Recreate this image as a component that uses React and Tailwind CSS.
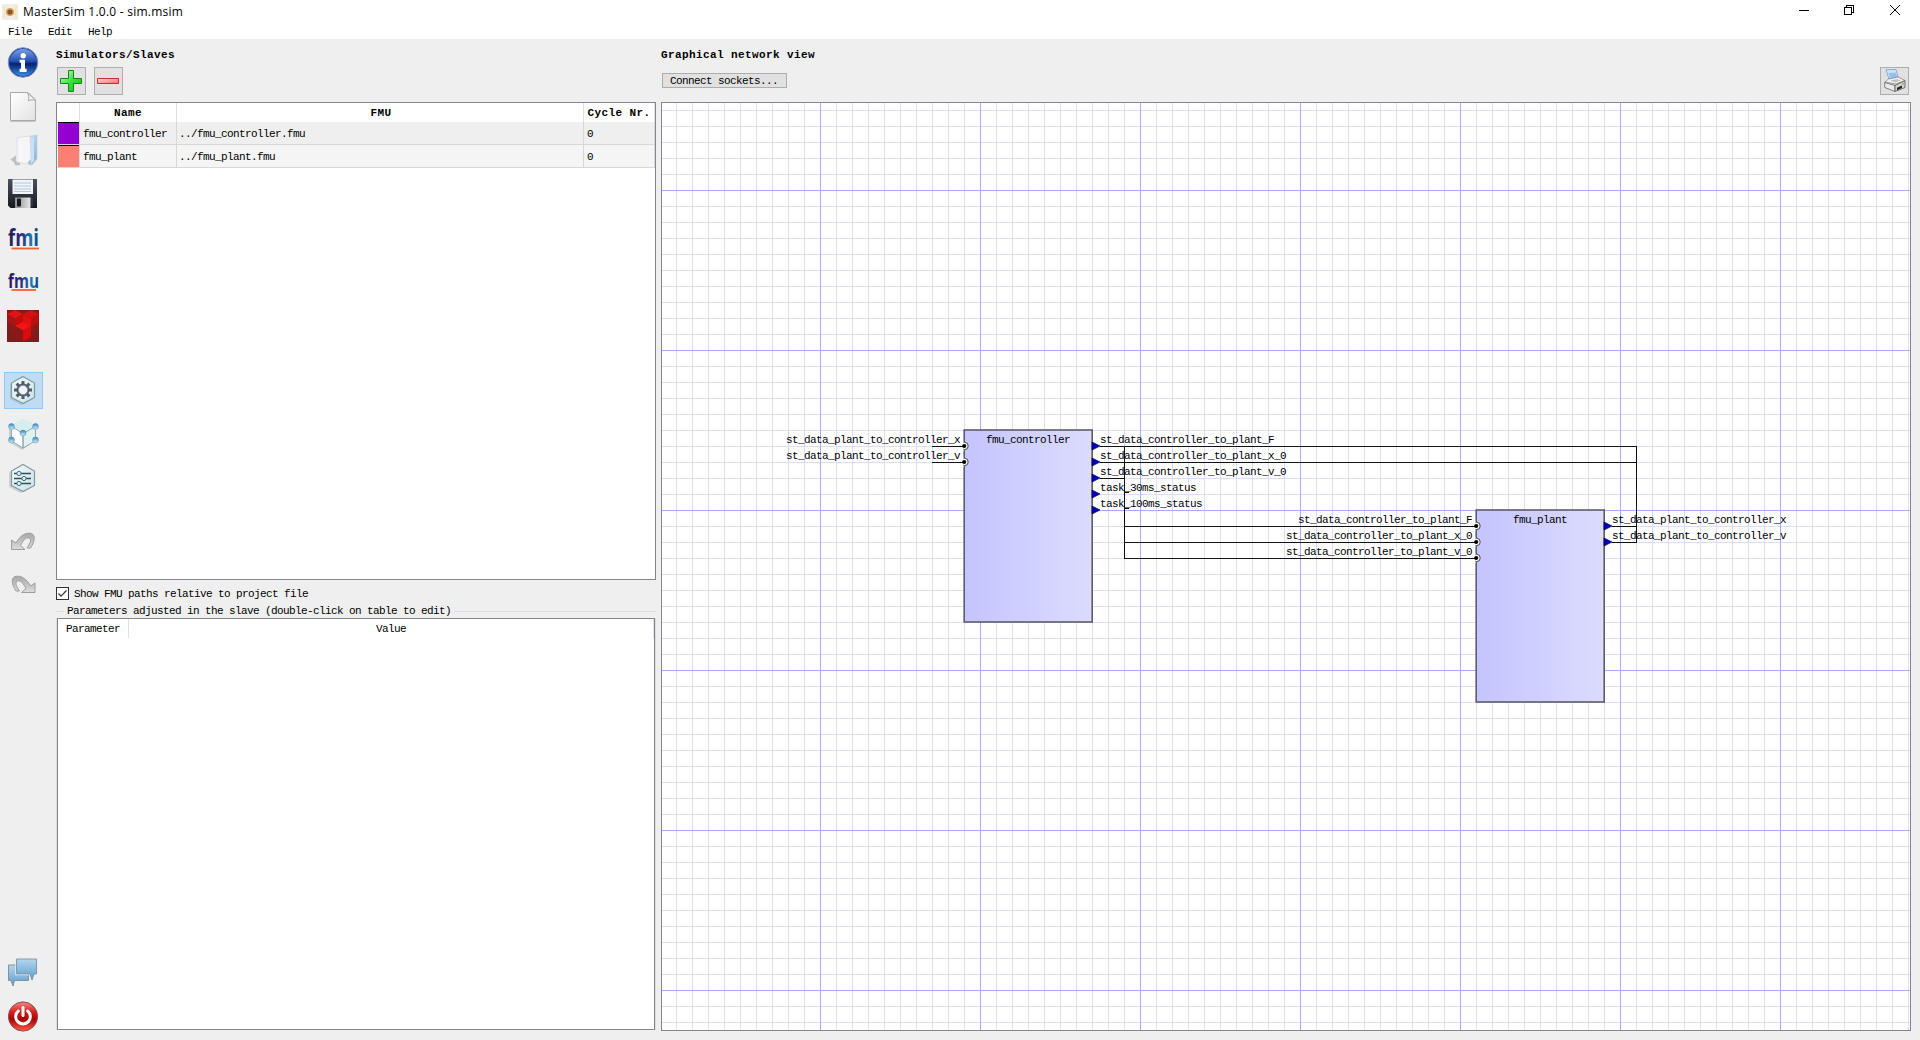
import React from "react";

const MONO = "font-['Liberation_Mono','Noto_Sans_CJK_SC',monospace]";
const TEXT = `${MONO} text-[11px] leading-[14px] tracking-[-0.6px] whitespace-pre text-black`;
const BOLD = `${MONO} text-[11px] leading-[14px] tracking-[0.4px] font-bold whitespace-pre text-black`;

function Icon({ children }) {
  return (
    <svg width="32" height="32" viewBox="0 0 32 32" className="block shrink-0 overflow-visible">
      {children}
    </svg>
  );
}

function Gradients() {
  return (
    <svg width="0" height="0" className="absolute">
      <defs>
        <linearGradient id="blueBall" x1="0" y1="0" x2="0" y2="1">
          <stop offset="0" stopColor="#7d9fe4" />
          <stop offset=".45" stopColor="#2450b4" />
          <stop offset=".55" stopColor="#04216f" />
          <stop offset="1" stopColor="#3f8be6" />
        </linearGradient>
        <linearGradient id="page" x1="0" y1="0" x2="1" y2="1">
          <stop offset="0" stopColor="#ffffff" />
          <stop offset="1" stopColor="#e2e2e2" />
        </linearGradient>
        <linearGradient id="folder" x1="0" y1="0" x2="1" y2="1">
          <stop offset="0" stopColor="#d8ebf8" />
          <stop offset="1" stopColor="#7fb0d6" />
        </linearGradient>
        <linearGradient id="disk" x1="0" y1="0" x2="0" y2="1">
          <stop offset="0" stopColor="#4a5260" />
          <stop offset="1" stopColor="#14171d" />
        </linearGradient>
        <linearGradient id="metal" x1="0" y1="0" x2="1" y2="0">
          <stop offset="0" stopColor="#8e8e8e" />
          <stop offset="1" stopColor="#e6e6e6" />
        </linearGradient>
        <linearGradient id="fm" x1="0" y1="0" x2="1" y2="0">
          <stop offset="0" stopColor="#2b1a5c" />
          <stop offset=".4" stopColor="#2a2a78" />
          <stop offset=".75" stopColor="#1878b4" />
          <stop offset="1" stopColor="#123c78" />
        </linearGradient>
        <radialGradient id="redBox">
          <stop offset="0" stopColor="#a81616" />
          <stop offset="1" stopColor="#7c1c1c" />
        </radialGradient>
        <linearGradient id="hex" x1="0" y1="0" x2="1" y2="1">
          <stop offset="0" stopColor="#f4fbfb" />
          <stop offset="1" stopColor="#c5e4e6" />
        </linearGradient>
        <linearGradient id="knob" x1="0" y1="0" x2="0" y2="1">
          <stop offset="0" stopColor="#3a86b4" />
          <stop offset=".5" stopColor="#7fc0e4" />
          <stop offset="1" stopColor="#e8f6ff" />
        </linearGradient>
        <linearGradient id="arrow" x1="0" y1="0" x2="0" y2="1">
          <stop offset="0" stopColor="#a8a8a8" />
          <stop offset="1" stopColor="#dcdcdc" />
        </linearGradient>
        <linearGradient id="bubble" x1="0" y1="0" x2="0" y2="1">
          <stop offset="0" stopColor="#b4d6ee" />
          <stop offset="1" stopColor="#5b9ccd" />
        </linearGradient>
        <linearGradient id="power" x1="0" y1="0" x2="0" y2="1">
          <stop offset="0" stopColor="#f08a80" />
          <stop offset=".35" stopColor="#d81c1c" />
          <stop offset=".6" stopColor="#a80404" />
          <stop offset="1" stopColor="#ff5a4a" />
        </linearGradient>
        <linearGradient id="plus" x1="0" y1="0" x2="1" y2="1">
          <stop offset="0" stopColor="#e0ffd8" />
          <stop offset=".5" stopColor="#3ee03e" />
          <stop offset="1" stopColor="#00c800" />
        </linearGradient>
        <linearGradient id="minus" x1="0" y1="0" x2="1" y2="1">
          <stop offset="0" stopColor="#ffd4d4" />
          <stop offset="1" stopColor="#f47070" />
        </linearGradient>
      </defs>
    </svg>
  );
}

const InfoIcon = () => (
  <Icon>
    <circle cx="16" cy="16.5" r="14.8" fill="#1c3f94" stroke="#7d93c4" strokeWidth="1" />
    <circle cx="16" cy="16.5" r="13.6" fill="url(#blueBall)" />
    <circle cx="16.2" cy="9.8" r="2.7" fill="#fff" />
    <path d="M12.6 13.8h5.4v9h1.6v3.2h-7v-3.2h1.4v-6h-1.4z" fill="#fff" />
  </Icon>
);

const NewIcon = () => (
  <Icon>
    <path d="M3.5 31.5h25" stroke="#c4c4c4" strokeWidth="1" />
    <path d="M3.5 2.5H21l7.5 7.5v20.5h-25z" fill="url(#page)" stroke="#a9a9a9" />
    <path d="M20.5 2.5c1.5 3 1.5 5.5.8 8.2 2.2-1 4.5-1 7.2-.4z" fill="#f2f2f2" stroke="#a9a9a9" />
  </Icon>
);

const OpenIcon = () => (
  <Icon>
    <path d="M3.500 25.500l6-4.500 4 10-5 .5-1.500-3z" fill="#b0b4b8" opacity=".8" />
    <path d="M19 3l11-2v24l-5 6-4-1z" fill="url(#folder)" stroke="#b9d3e6" strokeWidth=".7" />
    <path d="M10.5 3.5L23 2l1 23-5 5-8.5-2z" fill="#f6f6f6" stroke="#d8dadc" strokeWidth=".8" />
    <path d="M24 4l3-1v24l-3 3z" fill="#c9e1f3" />
    <path d="M9 4l2-1v26l-2-2z" fill="#e6eaee" />
  </Icon>
);

const SaveIcon = () => (
  <Icon>
    <path d="M1.5 1h28a.8.8 0 0 1 .5.8V30H3.5L1 27.500V1.500z" fill="url(#disk)" />
    <path d="M5.5 1.500H26v14.500H5.5z" fill="#f1f5f9" />
    <path d="M7 5h17M7 8h17M7 11h17M7 13.500h17" stroke="#b4c6d8" strokeWidth="1" />
    <path d="M8 19.500h15.5v10.500H8z" fill="url(#metal)" />
    <rect x="10" y="20.500" width="4" height="8" rx="1" fill="#15181d" />
    <path d="M25 20v9" stroke="#454b55" />
  </Icon>
);

function LogoIcon({ text, size, y, line }) {
  return (
    <Icon>
      <text x="1" y={y} textLength="31" lengthAdjust="spacingAndGlyphs" fontFamily="Open Sans, sans-serif" fontWeight="700" fontSize={size} fill="url(#fm)">
        {text}
      </text>
      <path d={`M4.500 ${line}H${text === "fmi" ? 32 : 29}`} stroke="#f0642c" strokeWidth="1.8" />
    </Icon>
  );
}

const SimIcon = () => (
  <Icon>
    <path d="M0 0h32v32H0z" fill="url(#redBox)" />
    <path d="M0 4l8-4 8 4-8 4.500z" fill="#e01414" />
    <path d="M16 4l8-4 8 4-8 4.500z" fill="#d01212" />
    <path d="M0 4l8 4.500v8L0 12z" fill="#a41616" />
    <path d="M8 8.500L16 4v8l-8 4.500z" fill="#c40c0c" />
    <path d="M16 4l8 4.500v8L16 12z" fill="#e41010" />
    <path d="M24 8.500L32 4v8.500l-8 4.500z" fill="#bb1010" />
    <path d="M8 16l8-4 8 4-8 4.500z" fill="#f41414" />
    <path d="M8 16l8 4.500v11L8 27z" fill="#8a1818" />
    <path d="M16 20.500l8-4.500v11l-8 4.500z" fill="#d80c0c" />
  </Icon>
);

const HEX = "M16 2.500L27.500 9v14.500L16 29.500 4.500 23.500V9z";

const GearIcon = () => (
  <Icon>
    <path d={HEX} transform="translate(-1.5 1.5)" fill="#8a9aa4" opacity=".35" />
    <path d={HEX} fill="url(#hex)" stroke="#7f98a2" strokeWidth="1.2" />
    <g stroke="#555b69" strokeWidth="3">
      <path d="M16 7v18M7 16h18M9.600 9.600l12.800 12.800M22.400 9.600L9.600 22.400" />
    </g>
    <circle cx="16" cy="16" r="6.5" fill="#555b69" />
    <circle cx="16" cy="16" r="4.6" fill="#edf5fa" stroke="#8f95a3" />
  </Icon>
);

const CubeIcon = () => (
  <Icon>
    <path d="M2 11l12-7 13 6v14l-12 8-13-8z" fill="#8a9aa4" opacity=".4" />
    <path d="M16 1.500L28.500 8.500v14L16 30 4.500 22.500v-14z" fill="url(#hex)" stroke="#7f9aa6" strokeWidth="1" />
    <path d="M16 1.500L28.500 8.500 16 15.500 4.500 8.500z" fill="#d5eef0" stroke="#e8f8f8" />
    <path d="M4.500 8.500L16 15.500v14L4.500 22.500z" fill="#fafefe" />
    <path d="M16 15.500l12.500-7v14l-12.500 7z" fill="#dff1f3" />
    <path d="M4.500 8.500L16 15.500l12.500-7M4.500 8.500v14M28.500 8.500v14" stroke="#90a8b4" fill="none" strokeWidth="1" />
    <path d="M16 15.500v14" stroke="#68808c" />
    {[[4.5, 8.5], [28.5, 8.5], [16, 15], [4.5, 22], [28.5, 22]].map(([x, y]) => (
      <circle key={`${x}-${y}`} cx={x} cy={y} r="2.9" fill="url(#knob)" stroke="#5888a4" strokeWidth=".6" />
    ))}
  </Icon>
);

const SlidersIcon = () => (
  <Icon>
    <path d={HEX} transform="translate(-2.5 1.5)" fill="#8a9aa4" opacity=".35" />
    <path d={HEX} fill="url(#hex)" stroke="#7f98a2" strokeWidth="1.2" />
    <path d="M7 11.500h17M7 16.500h17M7 21.500h17" stroke="#3f4a55" strokeWidth="1.3" />
    {[[12, 11.5], [17, 16.5], [12, 21.5]].map(([x, y]) => (
      <circle key={y} cx={x} cy={y} r="2.1" fill="#d8f1fb" stroke="#3c6e86" strokeWidth="1" />
    ))}
  </Icon>
);

const ARROW = "M4.500 14.500L9 17.500C13 10 19 6.500 24.500 8c4 1.500 3.500 8-1 14.500h-3.500c4-5.500 4.500-9 2-10-3-1-6 2.500-8.500 7.500l4.500 4H4.500z";
const UndoIcon = () => (
  <Icon>
    <path d={ARROW} transform="translate(0 -.5)" fill="url(#arrow)" stroke="#9d9d9d" strokeWidth="1" strokeLinejoin="round" />
  </Icon>
);
const RedoIcon = () => (
  <Icon>
    <g transform="translate(32.500 -1.500) scale(-1 1)">
      <path d={ARROW} fill="url(#arrow)" stroke="#9d9d9d" strokeWidth="1" strokeLinejoin="round" />
    </g>
  </Icon>
);

const ChatIcon = () => (
  <Icon>
    <path d="M1.500 8h20v15.500H7.500l-1.500 5.500-2-5.500H1.500z" fill="url(#bubble)" stroke="#84919b" />
    <path d="M9.500 2h20v15h-2.500l-2 6-2-6H9.500z" fill="url(#bubble)" stroke="#e8eef2" strokeWidth="2.5" />
    <path d="M9.500 2h20v15h-2.500l-2 6-2-6H9.500z" fill="url(#bubble)" stroke="#84919b" strokeWidth=".9" />
  </Icon>
);

const PowerIcon = () => (
  <Icon>
    <circle cx="16" cy="15.5" r="14.6" fill="url(#power)" stroke="#8b4a4a" strokeWidth="1" />
    <path d="M11.300 10a7.300 7.300 0 1 0 9.400 0" fill="none" stroke="#fff" strokeWidth="3" strokeLinecap="round" />
    <path d="M16 6.500v8" stroke="#fff" strokeWidth="3" strokeLinecap="round" />
  </Icon>
);

function ToolButton({ active, children }) {
  return (
    <div className="flex h-11 w-full shrink-0 items-center justify-center">
      <div className={active ? "flex h-[37px] w-[39px] items-center justify-center border border-[#90c8f6] bg-[#c0dcf3]" : "flex h-[37px] w-[39px] items-center justify-center"}>
        {children}
      </div>
    </div>
  );
}

function TitleBar() {
  return (
    <div className="flex h-[23px] shrink-0 items-center bg-white pl-[2px]">
      <svg width="16" height="16" viewBox="0 0 16 16" className="shrink-0">
        <rect width="16" height="16" rx="1" fill="#efede6" />
        <path d="M2 2q2 6 0 12M14 2q-2 6 0 12" stroke="#f4e39a" fill="none" />
        <circle cx="8" cy="8" r="4" fill="#d9a560" />
        <circle cx="8" cy="8" r="2.6" fill="#85562c" />
      </svg>
      <span className="ml-[5px] whitespace-pre font-['Open_Sans',sans-serif] text-[12px] leading-4 tracking-[0.24px] text-black">MasterSim 1.0.0 - sim.msim</span>
      <svg width="120" height="20" viewBox="0 0 120 20" className="mr-[10px] mb-px ml-auto" fill="none" stroke="#000" shapeRendering="crispEdges">
        <path d="M9 9.500h10" />
        <path d="M54.500 6.500h7v7h-7zM56.500 6.500v-2h7v7h-2" />
        <path d="M100 4l10 10M110 4l-10 10" shapeRendering="auto" />
      </svg>
    </div>
  );
}

function NameTable() {
  const rows = [
    ["bg-[#9400d3]", "bg-[#efefef]", "fmu_controller", "../fmu_controller.fmu"],
    ["bg-[#fa8072]", "bg-[#f5f5f5]", "fmu_plant", "../fmu_plant.fmu"],
  ];
  const cols = "grid grid-cols-[23px_97px_407px_1fr]";
  return (
    <div className="h-[478px] shrink-0 border border-[#828790] bg-white">
      <div className={`${cols} h-[19px] text-center ${BOLD}`}>
        <div className="border-r border-[#e0e0e0]" />
        <div className="border-r border-[#e0e0e0] pt-[3px]">Name</div>
        <div className="border-r border-[#e0e0e0] pt-[3px] pl-[2px]">FMU</div>
        <div className="border-r border-[#e0e0e0] pt-[3px]">Cycle Nr.</div>
      </div>
      {rows.map(([color, bg, name, fmu]) => (
        <div key={name} className={`${cols} h-[23px] ${TEXT} ${bg}`}>
          <div className="border-r border-b border-[#d8d8d8] pl-px">
            <div className={`h-full border-t border-black ${color}`} />
          </div>
          <div className="border-r border-b border-[#d8d8d8] pt-[5px] pl-[3px]">{name}</div>
          <div className="border-r border-b border-[#d8d8d8] pt-[5px] pl-[2px]">{fmu}</div>
          <div className="border-r border-b border-[#d8d8d8] pt-[5px] pl-[3px]">0</div>
        </div>
      ))}
    </div>
  );
}

function LeftPanel() {
  return (
    <div className="flex w-[600px] shrink-0 flex-col">
      <div className={`${BOLD} mt-[9px]`}>Simulators/Slaves</div>
      <div className="mt-[5px] flex gap-2 pl-px">
        <div className="flex h-7 w-[29px] items-center border border-[#adadad] bg-[#e1e1e1] pl-[2px]">
          <svg width="22" height="22" viewBox="0 0 22 22">
            <path d="M8.500.5h5v8h8v5h-8v8h-5v-8h-8v-5h8z" fill="url(#plus)" stroke="#0b8a14" strokeLinejoin="round" />
          </svg>
        </div>
        <div className="flex h-7 w-[29px] items-center border border-[#adadad] bg-[#e1e1e1] pl-[2px]">
          <svg width="22" height="22" viewBox="0 0 22 22">
            <path d="M.5 8.500h21v5H.5z" fill="url(#minus)" stroke="#c62d2d" strokeLinejoin="round" />
          </svg>
        </div>
      </div>
      <div className="h-[7px] shrink-0" />
      <NameTable />
      <div className="mt-[7px] flex h-[13px] shrink-0 items-center">
        <svg width="13" height="13" viewBox="0 0 13 13" className="shrink-0">
          <rect x=".5" y=".5" width="12" height="12" fill="#fff" stroke="#333" />
          <path d="M2.500 6.500L5 9.200l5.500-5.700" fill="none" stroke="#333" strokeWidth="1.2" />
        </svg>
        <span className={`${TEXT} ml-[5px]`}>Show FMU paths relative to project file</span>
      </div>
      <div className="mt-[4px] flex h-[14px] shrink-0 items-center">
        <div className="mt-[1px] h-px w-[8px] bg-[#dcdcdc]" />
        <span className={`${TEXT} mx-[3px]`}>Parameters adjusted in the slave (double-click on table to edit)</span>
        <div className="mt-[1px] h-px grow bg-[#dcdcdc]" />
      </div>
      <div className="flex h-[412px] border-x border-[#dcdcdc]">
        <div className="grow border border-[#828790] bg-white">
          <div className={`${TEXT} flex h-[19px]`}>
            <div className="w-[71px] border-r border-[#e0e0e0] pt-[3px] pl-[8px]">Parameter</div>
            <div className="grow border-r border-[#e0e0e0] pt-[3px] text-center">Value</div>
          </div>
        </div>
      </div>
    </div>
  );
}

/* Nodes of the network; coordinates are relative to the canvas' inner corner. */
const NODES = [
  {
    name: "fmu_controller", x: 302, y: 327,
    inputs: ["st_data_plant_to_controller_x", "st_data_plant_to_controller_v"],
    outputs: ["st_data_controller_to_plant_F", "st_data_controller_to_plant_x_0", "st_data_controller_to_plant_v_0", "task_30ms_status", "task_100ms_status"],
  },
  {
    name: "fmu_plant", x: 814, y: 407,
    inputs: ["st_data_controller_to_plant_F", "st_data_controller_to_plant_x_0", "st_data_controller_to_plant_v_0"],
    outputs: ["st_data_plant_to_controller_x", "st_data_plant_to_controller_v"],
  },
];

function Canvas() {
  return (
    <div className="relative h-[929px] w-[1250px] shrink-0 overflow-hidden border border-[#828790] bg-white">
      <svg width="1248" height="927" className="absolute top-0 left-0 block">
        <defs>
          <pattern id="minor" x="14" y="7" width="16" height="16" patternUnits="userSpaceOnUse">
            <path d="M0 .5H16M.5 0V16" stroke="#dcdcff" shapeRendering="crispEdges" />
          </pattern>
          <pattern id="major" x="158" y="87" width="160" height="160" patternUnits="userSpaceOnUse">
            <path d="M0 .5H160M.5 0V160" stroke="#aaaaff" shapeRendering="crispEdges" />
          </pattern>
          <linearGradient id="block">
            <stop offset="0" stopColor="#c4c4ff" />
            <stop offset="1" stopColor="#dcdcff" />
          </linearGradient>
        </defs>
        <rect width="1248" height="927" fill="url(#minor)" />
        <rect width="1248" height="927" fill="url(#major)" />
        {NODES.map((n) => (
          <g key={n.name}>
            <rect x={n.x + 0.2} y={n.y} width="128" height="192" fill="url(#block)" stroke="#5c5c6a" strokeWidth="1.6" />
            {n.inputs.map((s, i) => (
              <circle key={s} cx={n.x + 0.5} cy={n.y + 16 + 16 * i} r="3.7" fill="#fff" stroke="#444" strokeWidth="1" />
            ))}
            {n.inputs.map((s, i) => (
              <path key={s} d={`M${n.x - 3.7} ${n.y + 11 + 16 * i}h3.200v10h-3.200z`} fill="#fff" />
            ))}
            {n.outputs.map((s, i) => (
              <path key={s} d={`M${n.x + 128} ${n.y + 12 + 16 * i}l8 4-8 4z`} fill="#0000c8" stroke="#000030" strokeWidth=".7" />
            ))}
          </g>
        ))}
        <g fill="none" stroke="#111118" shapeRendering="crispEdges">
          <path d="M270 343.500H302M270 359.500H302" />
          <path d="M438 343.500H974.500V423.500H950M438 359.500H974.500V439.500H950" />
          <path d="M438 375.500H462.500M462.500 343V455.500H814M462.500 423.500H814M462.500 439.500H814M462 389.500H467M462 405.500H467" />
        </g>
        {NODES.flatMap((n) => n.inputs.map((s, i) => (
          <circle key={n.name + s} cx={n.x + 0.2} cy={n.y + 16 + 16 * i} r="2.1" fill="#000" />
        )))}
      </svg>
      {NODES.map((n) => (
        <React.Fragment key={n.name}>
          <div className={`${TEXT} absolute w-32 text-center`} style={{ left: n.x, top: n.y + 3 }}>{n.name}</div>
          <div className={`${TEXT} absolute w-[200px] text-right leading-4!`} style={{ left: n.x - 204, top: n.y + 2 }}>
            {n.inputs.map((s) => <div key={s} className="h-4">{s}</div>)}
          </div>
          <div className={`${TEXT} absolute leading-4!`} style={{ left: n.x + 136, top: n.y + 2 }}>
            {n.outputs.map((s) => <div key={s} className="h-4">{s}</div>)}
          </div>
        </React.Fragment>
      ))}
    </div>
  );
}

const PrinterIcon = () => (
  <svg width="22" height="24" viewBox="0 0 22 24">
    <path d="M2 .8L12 .5l2.500 9L5 10z" fill="#cfe4fb" stroke="#7a9cc8" strokeWidth=".8" />
    <path d="M4.500 4l7.500-.5 1.200 5-6.700 1z" fill="#93c0f4" />
    <path d="M4.500 10l9.500-2 7 3.500-9 3.500L1 13z" fill="#f4f4f2" stroke="#777" strokeWidth=".7" />
    <path d="M.6 13.500L11 16.500v6L.8 18.500z" fill="#ecece9" stroke="#666" strokeWidth=".8" />
    <path d="M11 16.500l10-5v7l-10 4z" fill="#d4d4d0" stroke="#555" strokeWidth=".8" />
    <path d="M13 18.800l5-2.200v2.400l-5 2.200z" fill="#222" />
    <path d="M18 14.500l2-.8v1.600l-2 .8z" fill="#4adf2a" />
    <path d="M6 11.500l7-1.500 4 1.500-6 2z" fill="#c2c2bf" />
  </svg>
);

export default function App() {
  return (
    <div className="flex h-[1040px] w-[1920px] flex-col overflow-hidden bg-[#efefef]">
      <Gradients />
      <TitleBar />
      <div className={`${TEXT} flex h-4 shrink-0 gap-4 bg-white pt-[2px] pl-[8px]`}>
        <span>File</span><span>Edit</span><span>Help</span>
      </div>
      <div className="flex grow">
        <div className="flex w-[46px] shrink-0 flex-col pt-px">
          <ToolButton><InfoIcon /></ToolButton>
          <ToolButton><NewIcon /></ToolButton>
          <ToolButton><OpenIcon /></ToolButton>
          <ToolButton><SaveIcon /></ToolButton>
          <ToolButton><LogoIcon text="fmi" size="24" y="24" line="26.5" /></ToolButton>
          <ToolButton><LogoIcon text="fmu" size="20" y="22" line="24" /></ToolButton>
          <ToolButton><SimIcon /></ToolButton>
          <div className="h-5" />
          <ToolButton active><GearIcon /></ToolButton>
          <ToolButton><CubeIcon /></ToolButton>
          <ToolButton><SlidersIcon /></ToolButton>
          <div className="h-5" />
          <ToolButton><UndoIcon /></ToolButton>
          <ToolButton><RedoIcon /></ToolButton>
          <div className="mt-auto mb-px">
            <ToolButton><ChatIcon /></ToolButton>
            <ToolButton><PowerIcon /></ToolButton>
          </div>
        </div>
        <div className="ml-[10px] flex gap-[5px]">
          <LeftPanel />
          <div className="flex flex-col">
            <div className={`${BOLD} mt-[9px] h-[14px]`}>Graphical network view</div>
            <div className="mt-[5px] mb-[7px] flex h-[28px] items-center justify-between pr-[2px] pl-px">
              <div className={`${TEXT} mb-[1px] h-[15px] w-[125px] border border-[#adadad] bg-[#e1e1e1] pl-[7px] leading-[14px]!`}>Connect sockets...</div>
              <div className="flex h-7 w-[29px] items-center justify-center border border-[#adadad] bg-[#e1e1e1]">
                <PrinterIcon />
              </div>
            </div>
            <Canvas />
          </div>
        </div>
      </div>
    </div>
  );
}
